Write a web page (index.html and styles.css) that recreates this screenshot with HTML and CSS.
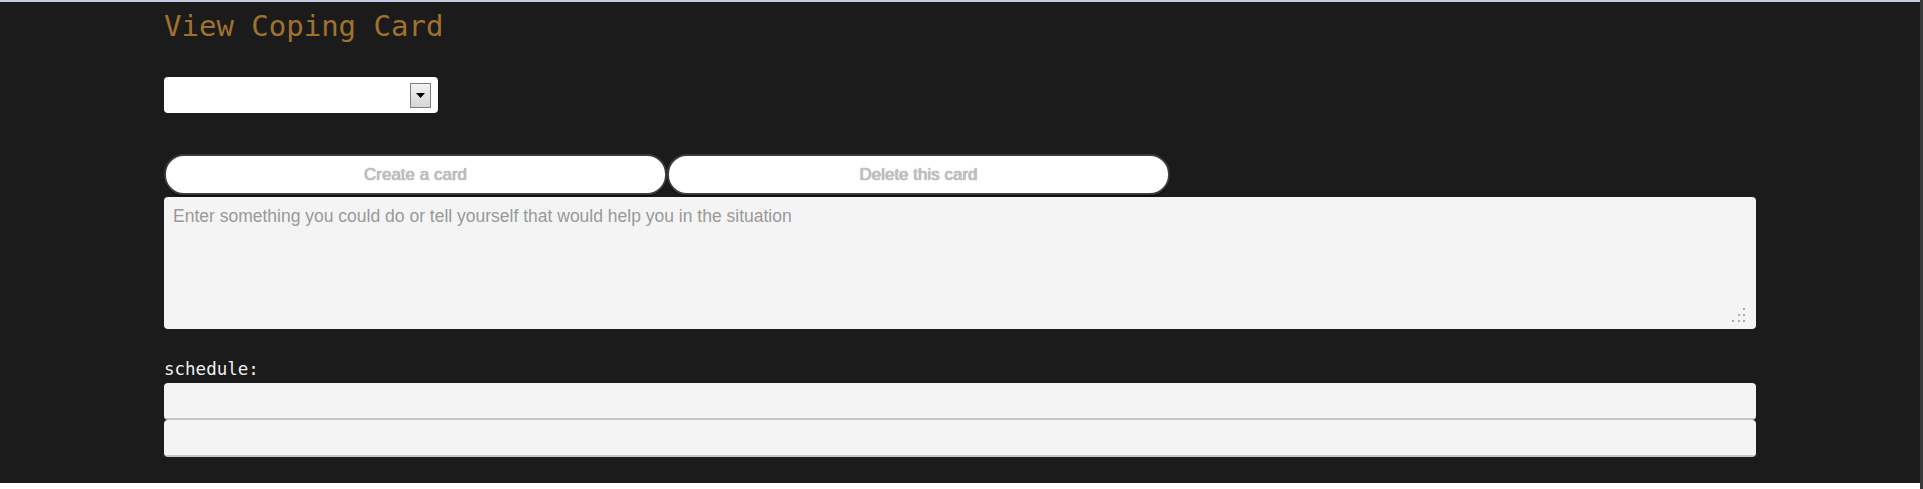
FILE: index.html
```html
<!DOCTYPE html>
<html lang="en">
<head>
<meta charset="utf-8">
<title>View Coping Card</title>
<link rel="stylesheet" href="styles.css">
</head>
<body>
<div class="screen">
  <div class="frame">
    <main class="page">
      <h1 class="title">View Coping Card</h1>
      <div class="picker">
        <select class="picker-select" aria-label="Coping card"><option></option></select>
        <span class="picker-arrow"><svg width="9" height="5" viewBox="0 0 9 5"><path d="M0 0H9L4.5 5Z" fill="#000"/></svg></span>
      </div>
      <div class="actions">
        <button class="pill" type="button">Create a card</button>
        <button class="pill" type="button">Delete this card</button>
      </div>
      <div class="note-wrap">
        <textarea class="note" placeholder="Enter something you could do or tell yourself that would help you in the situation"></textarea>
        <svg class="grip" width="14" height="15" viewBox="0 0 14 15">
          <rect x="11" y="0" width="2" height="2" fill="#a8a8a8"/>
          <rect x="6" y="6" width="2" height="2" fill="#a8a8a8"/>
          <rect x="11" y="6" width="2" height="2" fill="#a8a8a8"/>
          <rect x="0" y="12" width="2" height="2" fill="#a8a8a8"/>
          <rect x="6" y="12" width="2" height="2" fill="#a8a8a8"/>
          <rect x="11" y="12" width="2" height="2" fill="#a8a8a8"/>
        </svg>
      </div>
      <label class="label" for="s1">schedule:</label>
      <input class="field" id="s1" type="text">
      <input class="field" type="text" aria-label="schedule 2">
    </main>
  </div>
  <div class="edge"></div>
</div>
</body>
</html>
```

FILE: styles.css
```css
html, body {
  margin: 0;
  padding: 0;
  background: #ffffff;
}

.screen {
  display: flex;
  width: 1923px;
  height: 489px;
  overflow: hidden;
}

.frame {
  width: 1920px;
  height: 483px;
  box-sizing: border-box;
  border-top: 2px solid #c3cce0;
  background: #1b1b1b;
}

.edge {
  width: 3px;
  height: 489px;
  background: #3a3a3a;
}

.page {
  width: 1592px;
  margin: 0 auto;
  display: flex;
  flex-direction: column;
  align-items: flex-start;
}

.title {
  margin: 7px 0 0 0;
  font-family: "DejaVu Sans Mono", monospace;
  font-weight: normal;
  font-size: 29px;
  line-height: 34px;
  color: #a0722f;
}

.picker {
  margin-top: 34px;
  width: 274px;
  height: 36px;
  box-sizing: border-box;
  background: #ffffff;
  border-radius: 4px;
  display: flex;
  align-items: center;
  padding-right: 7px;
}

.picker-select {
  flex: 1;
  height: 100%;
  border: none;
  background: transparent;
  appearance: none;
  -webkit-appearance: none;
  outline: none;
  font-family: "Liberation Sans", Arial, sans-serif;
  font-size: 16px;
}

.picker-arrow {
  width: 21px;
  height: 25px;
  box-sizing: border-box;
  border: 1px solid #7d7d7d;
  background: linear-gradient(#f3f3f3, #d6d6d6);
  display: flex;
  align-items: center;
  justify-content: center;
  margin-top: 1px;
}

.actions {
  margin-top: 41px;
  display: flex;
}

.pill {
  width: 503px;
  height: 41px;
  box-sizing: border-box;
  background: #ffffff;
  border: 2px solid #3c3c3c;
  border-radius: 20px;
  box-shadow: 0 1px 1px rgba(0, 0, 0, 0.8);
  font-family: "Liberation Sans", Arial, sans-serif;
  font-size: 17px;
  color: #c4c4c4;
  text-shadow: 0 0 1px #6a6a6a;
  padding: 0;
  cursor: pointer;
}

.note-wrap {
  position: relative;
  margin-top: 2px;
  width: 1592px;
  height: 132px;
}

.note {
  display: block;
  width: 100%;
  height: 100%;
  box-sizing: border-box;
  margin: 0;
  border: none;
  border-radius: 4px;
  background: #f4f4f4;
  padding: 9px 9px;
  resize: none;
  outline: none;
  font-family: "Liberation Sans", Arial, sans-serif;
  font-size: 17.5px;
  line-height: 20px;
  color: #333;
}

.note::placeholder {
  color: #999999;
}

.grip {
  position: absolute;
  right: 10px;
  bottom: 6px;
}

.label {
  margin-top: 30px;
  font-family: "DejaVu Sans Mono", monospace;
  font-size: 17.5px;
  line-height: 20px;
  color: #f0f0f0;
}

.field {
  display: block;
  width: 1592px;
  height: 37px;
  box-sizing: border-box;
  margin: 0;
  border: none;
  border-bottom: 2px solid #c6c6c6;
  border-radius: 4px;
  background: #f4f4f4;
  outline: none;
  font-family: "Liberation Sans", Arial, sans-serif;
  font-size: 16px;
  padding: 0 9px;
}

.label + .field {
  margin-top: 4px;
}
```
